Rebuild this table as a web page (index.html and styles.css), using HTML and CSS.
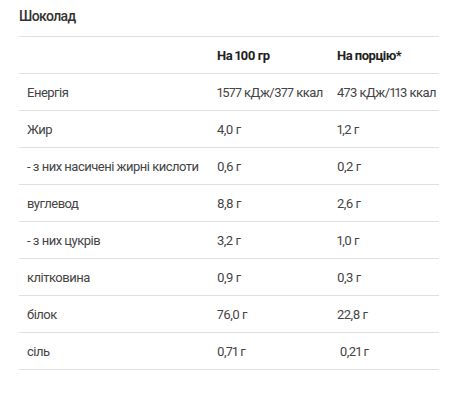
FILE: index.html
```html
<!DOCTYPE html>
<html lang="uk">
<head>
<meta charset="utf-8">
<link rel="stylesheet" href="styles.css">
</head>
<body>
<div class="wrap">
  <h3 class="title">Шоколад</h3>
  <table class="nutri">
    <colgroup><col class="c1"><col class="c2"><col class="c3"></colgroup>
    <thead>
      <tr><th></th><th>На 100 гр</th><th>На порцію*</th></tr>
    </thead>
    <tbody>
      <tr><td>Енергія</td><td>1577 кДж/377 ккал</td><td>473 кДж/113 ккал</td></tr>
      <tr><td>Жир</td><td>4,0 г</td><td>1,2 г</td></tr>
      <tr><td>- з них насичені жирні кислоти</td><td>0,6 г</td><td>0,2 г</td></tr>
      <tr><td>вуглевод</td><td>8,8 г</td><td>2,6 г</td></tr>
      <tr><td>- з них цукрів</td><td>3,2 г</td><td>1,0 г</td></tr>
      <tr><td>клітковина</td><td>0,9 г</td><td>0,3 г</td></tr>
      <tr><td>білок</td><td>76,0 г</td><td>22,8 г</td></tr>
      <tr><td>сіль</td><td>0,71 г</td><td>&nbsp;0,21 г</td></tr>
    </tbody>
  </table>
</div>
</body>
</html>
```
FILE: styles.css
```css
html, body {
  margin: 0;
  padding: 0;
  background: #fff;
}
body {
  font-family: Roboto, "Liberation Sans", sans-serif;
  color: #333;
  font-variant-numeric: proportional-nums;
}
.wrap {
  padding: 6px 32px 0 19px;
}
.title {
  margin: 0;
  height: 30px;
  line-height: 20px;
  font-size: 14px;
  font-weight: 500;
  letter-spacing: -0.6px;
  color: #333;
}
.nutri {
  width: 420px;
  border-collapse: collapse;
  border-top: 1px solid #e0e0e0;
  font-size: 13px;
  letter-spacing: -0.5px;
  table-layout: fixed;
}
.c1 { width: 190px; }
.c2 { width: 120px; }
.c3 { width: 110px; }
.nutri th, .nutri td {
  height: 36px;
  padding: 0 0 0 8px;
  text-align: left;
  vertical-align: middle;
  border-bottom: 1px solid #e0e0e0;
  white-space: nowrap;
  color: #444;
}
.nutri th {
  font-weight: 700;
  color: #222;
}
```
